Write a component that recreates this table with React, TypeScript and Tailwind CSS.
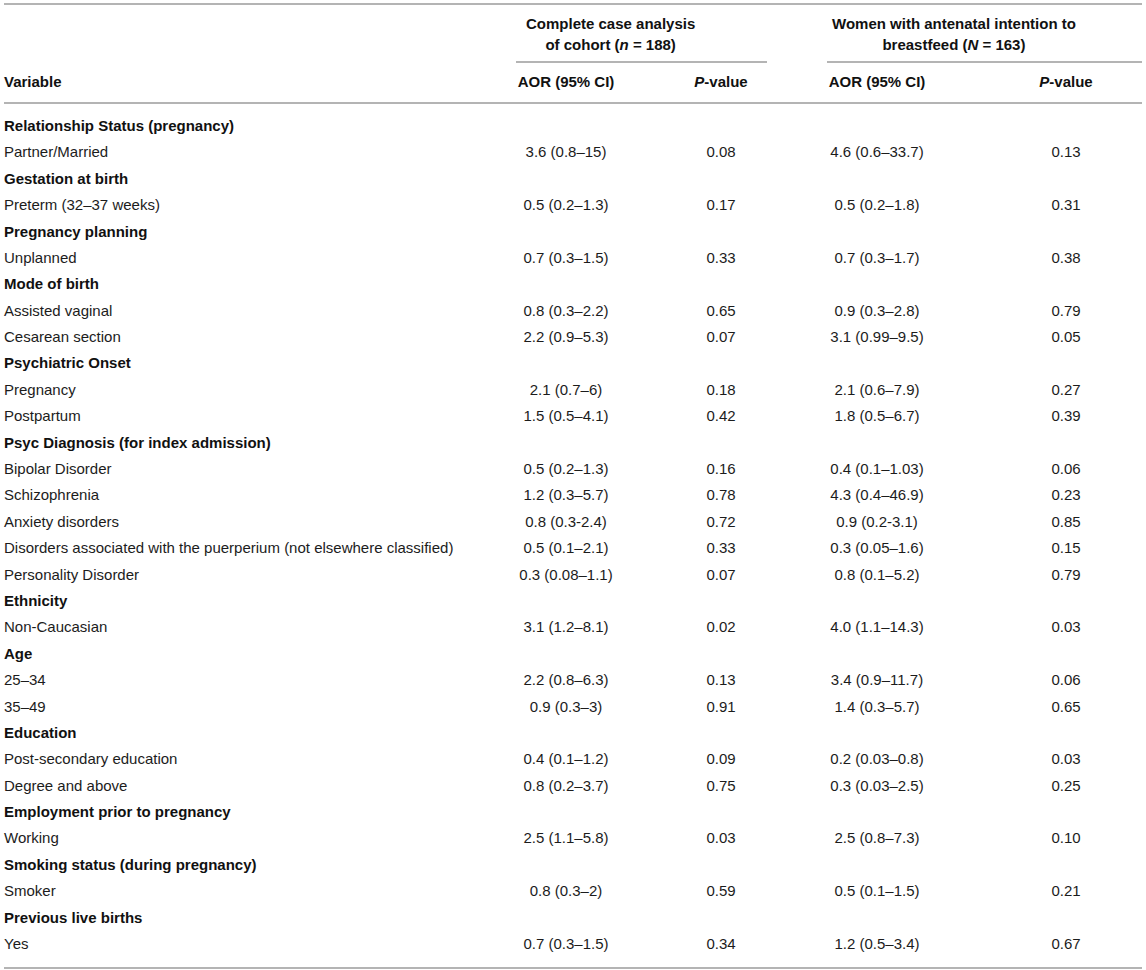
type Row =
  | { kind: 'group'; label: string }
  | { kind: 'item'; label: string; aor1: string; p1: string; aor2: string; p2: string };

const rows: Row[] = [
  { kind: 'group', label: 'Relationship Status (pregnancy)' },
  { kind: 'item', label: 'Partner/Married', aor1: '3.6 (0.8–15)', p1: '0.08', aor2: '4.6 (0.6–33.7)', p2: '0.13' },
  { kind: 'group', label: 'Gestation at birth' },
  { kind: 'item', label: 'Preterm (32–37 weeks)', aor1: '0.5 (0.2–1.3)', p1: '0.17', aor2: '0.5 (0.2–1.8)', p2: '0.31' },
  { kind: 'group', label: 'Pregnancy planning' },
  { kind: 'item', label: 'Unplanned', aor1: '0.7 (0.3–1.5)', p1: '0.33', aor2: '0.7 (0.3–1.7)', p2: '0.38' },
  { kind: 'group', label: 'Mode of birth' },
  { kind: 'item', label: 'Assisted vaginal', aor1: '0.8 (0.3–2.2)', p1: '0.65', aor2: '0.9 (0.3–2.8)', p2: '0.79' },
  { kind: 'item', label: 'Cesarean section', aor1: '2.2 (0.9–5.3)', p1: '0.07', aor2: '3.1 (0.99–9.5)', p2: '0.05' },
  { kind: 'group', label: 'Psychiatric Onset' },
  { kind: 'item', label: 'Pregnancy', aor1: '2.1 (0.7–6)', p1: '0.18', aor2: '2.1 (0.6–7.9)', p2: '0.27' },
  { kind: 'item', label: 'Postpartum', aor1: '1.5 (0.5–4.1)', p1: '0.42', aor2: '1.8 (0.5–6.7)', p2: '0.39' },
  { kind: 'group', label: 'Psyc Diagnosis (for index admission)' },
  { kind: 'item', label: 'Bipolar Disorder', aor1: '0.5 (0.2–1.3)', p1: '0.16', aor2: '0.4 (0.1–1.03)', p2: '0.06' },
  { kind: 'item', label: 'Schizophrenia', aor1: '1.2 (0.3–5.7)', p1: '0.78', aor2: '4.3 (0.4–46.9)', p2: '0.23' },
  { kind: 'item', label: 'Anxiety disorders', aor1: '0.8 (0.3-2.4)', p1: '0.72', aor2: '0.9 (0.2-3.1)', p2: '0.85' },
  { kind: 'item', label: 'Disorders associated with the puerperium (not elsewhere classified)', aor1: '0.5 (0.1–2.1)', p1: '0.33', aor2: '0.3 (0.05–1.6)', p2: '0.15' },
  { kind: 'item', label: 'Personality Disorder', aor1: '0.3 (0.08–1.1)', p1: '0.07', aor2: '0.8 (0.1–5.2)', p2: '0.79' },
  { kind: 'group', label: 'Ethnicity' },
  { kind: 'item', label: 'Non-Caucasian', aor1: '3.1 (1.2–8.1)', p1: '0.02', aor2: '4.0 (1.1–14.3)', p2: '0.03' },
  { kind: 'group', label: 'Age' },
  { kind: 'item', label: '25–34', aor1: '2.2 (0.8–6.3)', p1: '0.13', aor2: '3.4 (0.9–11.7)', p2: '0.06' },
  { kind: 'item', label: '35–49', aor1: '0.9 (0.3–3)', p1: '0.91', aor2: '1.4 (0.3–5.7)', p2: '0.65' },
  { kind: 'group', label: 'Education' },
  { kind: 'item', label: 'Post-secondary education', aor1: '0.4 (0.1–1.2)', p1: '0.09', aor2: '0.2 (0.03–0.8)', p2: '0.03' },
  { kind: 'item', label: 'Degree and above', aor1: '0.8 (0.2–3.7)', p1: '0.75', aor2: '0.3 (0.03–2.5)', p2: '0.25' },
  { kind: 'group', label: 'Employment prior to pregnancy' },
  { kind: 'item', label: 'Working', aor1: '2.5 (1.1–5.8)', p1: '0.03', aor2: '2.5 (0.8–7.3)', p2: '0.10' },
  { kind: 'group', label: 'Smoking status (during pregnancy)' },
  { kind: 'item', label: 'Smoker', aor1: '0.8 (0.3–2)', p1: '0.59', aor2: '0.5 (0.1–1.5)', p2: '0.21' },
  { kind: 'group', label: 'Previous live births' },
  { kind: 'item', label: 'Yes', aor1: '0.7 (0.3–1.5)', p1: '0.34', aor2: '1.2 (0.5–3.4)', p2: '0.67' },
];

// column grid shared by header and body
const cols = 'grid grid-cols-[482px_160px_150px_194px_152px]';

function Rule() {
  return <div className="h-[2px] bg-[#b4b4b4]" />;
}

export default function App() {
  return (
    <div
      className="bg-white px-[4px] pt-[3px] text-[15px] text-[#1c1c1c]"
      style={{ fontFamily: '"Liberation Sans", Arial, Helvetica, sans-serif' }}
    >
      <Rule />

      {/* header */}
      <div className={`${cols} font-bold text-[#111]`}>
        <div />
        <div className="col-span-2 flex flex-col pt-[8px]">
          <div className="ml-[40px] inline-block self-start text-center leading-[21px]">
            Complete case analysis
            <br />
            of cohort (<i>n</i> = 188)
          </div>
          <div className="ml-[30px] mr-[29px] mt-[6px] h-[2px] bg-[#b4b4b4]" />
        </div>
        <div className="col-span-2 flex flex-col pt-[8px]">
          <div className="ml-[36px] inline-block self-start text-center leading-[21px]">
            Women with antenatal intention to
            <br />
            breastfeed (<i>N</i> = 163)
          </div>
          <div className="ml-[31px] mt-[6px] h-[2px] bg-[#b4b4b4]" />
        </div>

        <div className="pb-[10px] pt-[8px] leading-[21px]">Variable</div>
        <div className="pb-[10px] pt-[8px] text-center leading-[21px]">AOR (95% CI)</div>
        <div className="pb-[10px] pt-[8px] text-center leading-[21px]">
          <i>P</i>-value
        </div>
        <div className="pb-[10px] pr-8 pt-[8px] text-center leading-[21px]">AOR (95% CI)</div>
        <div className="pb-[10px] pt-[8px] text-center leading-[21px]">
          <i>P</i>-value
        </div>
      </div>

      <Rule />

      {/* body */}
      <div className={`${cols} py-[9px]`}>
        {rows.map((row, i) =>
          row.kind === 'group' ? (
            <div key={i} className="col-span-5 flex h-[26.4px] items-center font-bold text-[#111]">
              {row.label}
            </div>
          ) : (
            <div key={i} className="col-span-5 grid h-[26.4px] grid-cols-subgrid items-center">
              <div className="whitespace-nowrap">{row.label}</div>
              <div className="text-center">{row.aor1}</div>
              <div className="text-center">{row.p1}</div>
              <div className="pr-8 text-center">{row.aor2}</div>
              <div className="text-center">{row.p2}</div>
            </div>
          )
        )}
      </div>

      <Rule />
    </div>
  );
}
